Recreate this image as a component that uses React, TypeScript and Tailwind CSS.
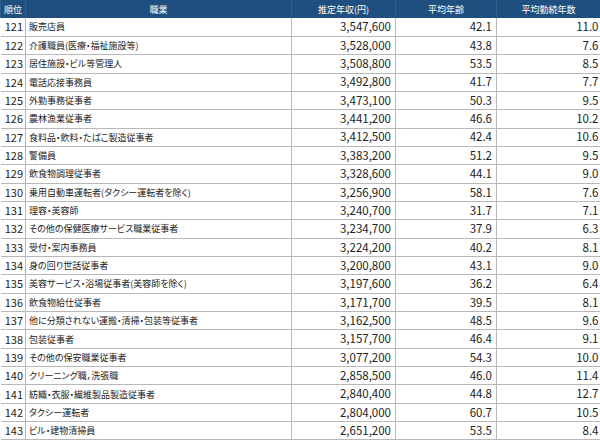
const rows: [number, string, string, string, string][] = [
  [121, "販売店員", "3,547,600", "42.1", "11.0"],
  [122, "介護職員(医療・福祉施設等)", "3,528,000", "43.8", "7.6"],
  [123, "居住施設・ビル等管理人", "3,508,800", "53.5", "8.5"],
  [124, "電話応接事務員", "3,492,800", "41.7", "7.7"],
  [125, "外勤事務従事者", "3,473,100", "50.3", "9.5"],
  [126, "農林漁業従事者", "3,441,200", "46.6", "10.2"],
  [127, "食料品・飲料・たばこ製造従事者", "3,412,500", "42.4", "10.6"],
  [128, "警備員", "3,383,200", "51.2", "9.5"],
  [129, "飲食物調理従事者", "3,328,600", "44.1", "9.0"],
  [130, "乗用自動車運転者(タクシー運転者を除く)", "3,256,900", "58.1", "7.6"],
  [131, "理容・美容師", "3,240,700", "31.7", "7.1"],
  [132, "その他の保健医療サービス職業従事者", "3,234,700", "37.9", "6.3"],
  [133, "受付・案内事務員", "3,224,200", "40.2", "8.1"],
  [134, "身の回り世話従事者", "3,200,800", "43.1", "9.0"],
  [135, "美容サービス・浴場従事者(美容師を除く)", "3,197,600", "36.2", "6.4"],
  [136, "飲食物給仕従事者", "3,171,700", "39.5", "8.1"],
  [137, "他に分類されない運搬・清掃・包装等従事者", "3,162,500", "48.5", "9.6"],
  [138, "包装従事者", "3,157,700", "46.4", "9.1"],
  [139, "その他の保安職業従事者", "3,077,200", "54.3", "10.0"],
  [140, "クリーニング職，洗張職", "2,858,500", "46.0", "11.4"],
  [141, "紡織・衣服・繊維製品製造従事者", "2,840,400", "44.8", "12.7"],
  [142, "タクシー運転者", "2,804,000", "60.7", "10.5"],
  [143, "ビル・建物清掃員", "2,651,200", "53.5", "8.4"],
];

const headers = ["順位", "職業", "推定年収(円)", "平均年齢", "平均勤続年数"];

export default function App() {
  return (
    <div className="w-[600px] h-[440px] overflow-hidden bg-white font-['Noto_Sans_CJK_JP','Noto_Sans',sans-serif] [font-feature-settings:'palt']">
      <table className="w-[600px] table-fixed border-collapse">
        <colgroup>
          <col className="w-[25px]" />
          <col className="w-[266px]" />
          <col className="w-[104px]" />
          <col className="w-[101px]" />
          <col className="w-[104px]" />
        </colgroup>
        <thead>
          <tr className="h-[18px] bg-[#1e4f7e] text-white text-[9px]">
            {headers.map((h, i) => (
              <th
                key={h}
                className={`border-x border-[#2f5f8c] font-normal leading-none ${i === 0 ? "text-left pl-[3px]" : "text-center"}`}
              >
                {h}
              </th>
            ))}
          </tr>
        </thead>
        <tbody className="text-[#222]">
          {rows.map((r) => (
            <tr key={r[0]} className="h-[18.35px] border-b border-[#b8b8b8]">
              <td className="border-r border-[#b8b8b8] pr-[2px] text-right text-[11px] leading-none">{r[0]}</td>
              <td className="border-r border-[#b8b8b8] pl-[3px] text-[9px] leading-none whitespace-nowrap">{r[1]}</td>
              <td className="border-r border-[#b8b8b8] pr-[4px] text-right text-[11.5px] leading-none">{r[2]}</td>
              <td className="border-r border-[#b8b8b8] pr-[4px] text-right text-[11.5px] leading-none">{r[3]}</td>
              <td className="pr-[2px] text-right text-[11.5px] leading-none">{r[4]}</td>
            </tr>
          ))}
        </tbody>
      </table>
    </div>
  );
}
